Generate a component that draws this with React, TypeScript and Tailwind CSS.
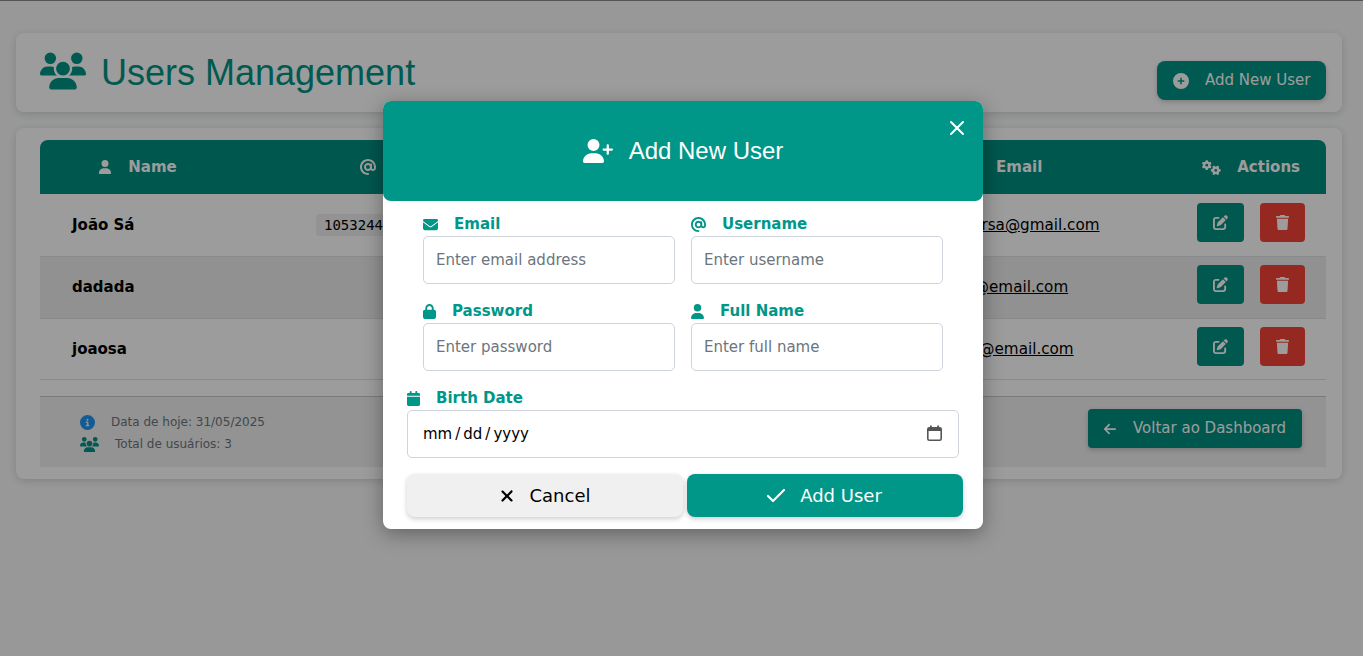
import { Check, X } from "lucide-react";
import {
  FaArrowLeft,
  FaAt,
  FaCalendar,
  FaCirclePlus,
  FaCircleInfo,
  FaEnvelope,
  FaGears,
  FaLock,
  FaPenToSquare,
  FaTrash,
  FaUser,
  FaUserPlus,
  FaUsers,
  FaXmark,
} from "react-icons/fa6";

const users = [
  { name: "João Sá", code: "10532441234", email: "joaoversa@gmail.com", height: "h-[63px]", codeOffset: "ml-0", offset: "ml-[1px]", actions: "-mt-[5px]", striped: false },
  { name: "dadada", code: "dadada", email: "dadada@email.com", height: "h-[62px]", codeOffset: "ml-[100px]", offset: "-ml-[13px]", actions: "-mt-[6px]", striped: true },
  { name: "joaosa", code: "joaosa", email: "joaosa@email.com", height: "h-[61px]", codeOffset: "ml-[100px]", offset: "ml-0", actions: "-mt-[6px]", striped: false },
];

function Field({ icon, label, placeholder }: { icon: React.ReactNode; label: string; placeholder: string }) {
  return (
    <div className="w-[252px]">
      <label className="flex h-[23px] items-center gap-4 text-[15px] font-bold text-[#009688]">
        {icon}
        {label}
      </label>
      <input
        placeholder={placeholder}
        className="block h-[48px] w-full rounded-[5px] border border-[#ced4da] bg-white px-3 text-[15px] outline-none placeholder:text-[#6c757d]"
      />
    </div>
  );
}

function CalendarGlyph() {
  return (
    <svg width="15" height="16" viewBox="0 0 15 16" fill="none" className="absolute right-[17px] top-[15px]">
      <rect x="0.8" y="2.8" width="13.4" height="12.4" rx="1.5" stroke="#555" strokeWidth="1.6" />
      <rect x="1" y="3" width="13" height="3" fill="#555" />
      <rect x="3" y="0.5" width="1.8" height="3" fill="#555" />
      <rect x="10.2" y="0.5" width="1.8" height="3" fill="#555" />
    </svg>
  );
}

export default function App() {
  return (
    <div className="relative h-[656px] overflow-hidden border-t border-[#555] bg-[#f8f9fa] font-['DejaVu_Sans',sans-serif] text-black">
      <div className="pl-4 pr-[21px] pt-8">
        <div className="flex h-[79px] justify-between rounded-lg bg-white pl-6 pr-4 shadow-[0_2px_8px_rgba(0,0,0,0.15)]">
          <h1 className="flex h-[79px] items-center gap-[15px] font-['Liberation_Sans',sans-serif] text-[36px] text-[#009485]">
            <FaUsers size={46} className="-mt-[4px]" />
            Users Management
          </h1>
          <button className="mt-7 flex h-[39px] w-[169px] items-center gap-[16px] rounded-lg bg-[#009485] pl-4 text-[15px] text-white shadow-[0_2px_5px_rgba(0,0,0,0.2)]">
            <FaCirclePlus size={16} />
            Add New User
          </button>
        </div>

        <div className="mt-4 rounded-lg bg-white pb-3 pl-6 pr-4 pt-3 shadow-[0_2px_8px_rgba(0,0,0,0.15)]">
          <div className="flex h-[54px] items-center rounded-t-lg bg-[#008e80] text-[15px] font-bold text-white">
            <div className="flex w-[195px] items-center justify-center gap-4">
              <FaUser size={14} />
              Name
            </div>
            <div className="flex w-[761px] items-center gap-4 pl-[125px]">
              <FaAt size={16} />
              Username
            </div>
            <div>Email</div>
            <div className="ml-auto flex items-center gap-4 pr-[26px]">
              <FaGears size={19} />
              Actions
            </div>
          </div>

          {users.map((user) => (
            <div
              key={user.name}
              className={`flex items-center border-b border-[#dee2e6] pl-8 pr-[21px] ${user.height} ${user.striped ? "bg-[#eeeeee]" : ""}`}
            >
              <div className="w-[244px] text-[15px] font-bold">{user.name}</div>
              <div className="-mt-[1px] w-[614px]">
                <code className={`rounded-[4px] bg-[#f0f0f0] px-2 py-[3px] font-['DejaVu_Sans_Mono',monospace] text-[14px] ${user.codeOffset}`}>
                  {user.code}
                </code>
              </div>
              <a className={`text-[15.2px] underline ${user.offset}`}>{user.email}</a>
              <div className={`ml-auto flex gap-4 ${user.actions}`}>
                <button className="flex h-[39px] w-[47px] items-center justify-center rounded-[4px] bg-[#009082] text-white">
                  <FaPenToSquare size={15} />
                </button>
                <button className="flex h-[39px] w-[45px] items-center justify-center rounded-[4px] bg-[#f44336] text-white">
                  <FaTrash size={15} />
                </button>
              </div>
            </div>
          ))}

          <div className="mt-4 flex h-[71px] items-start justify-between border-t border-[#c8c8c8] bg-[#f0f0f0] pl-10 pr-6 pt-3 text-[12px] text-[#6c757d]">
            <div className="pt-[2px]">
              <div className="flex h-[22px] items-center gap-4">
                <FaCircleInfo size={15} className="text-[#2196f3]" />
                Data de hoje: 31/05/2025
              </div>
              <div className="flex h-[22px] items-center gap-4">
                <FaUsers size={19} className="text-[#009485]" />
                Total de usuários: 3
              </div>
            </div>
            <button className="flex h-[39px] w-[214px] items-center gap-4 rounded-[4px] bg-[#008e80] pl-[15px] text-[15px] text-white shadow-[0_2px_5px_rgba(0,0,0,0.2)]">
              <FaArrowLeft size={14} />
              Voltar ao Dashboard
            </button>
          </div>
        </div>
      </div>

      <div className="absolute inset-0 flex justify-center bg-black/[0.39] pl-[3px]">
        <div className="mt-[100px] h-[428px] w-[600px] rounded-lg bg-white shadow-[0_5px_20px_rgba(0,0,0,0.35)]">
          <div className="relative flex h-[100px] items-center justify-center gap-4 rounded-lg bg-[#009688] font-['Liberation_Sans',sans-serif] text-[24px] text-white">
            <FaUserPlus size={30} />
            Add New User
            <X size={24} strokeWidth={2} className="absolute right-[14px] top-[15px]" />
          </div>

          <div className="px-6 pt-[12px]">
            <div className="flex gap-4 pl-4">
              <Field icon={<FaEnvelope size={15} />} label="Email" placeholder="Enter email address" />
              <Field icon={<FaAt size={15} />} label="Username" placeholder="Enter username" />
            </div>
            <div className="mt-4 flex gap-4 pl-4">
              <Field icon={<FaLock className="h-[15px] w-[13px]" />} label="Password" placeholder="Enter password" />
              <Field icon={<FaUser className="h-[15px] w-[13px]" />} label="Full Name" placeholder="Enter full name" />
            </div>
            <div className="mt-4 w-[552px]">
              <label className="flex h-[23px] items-center gap-4 text-[15px] font-bold text-[#009688]">
                <FaCalendar className="h-[15px] w-[13px]" />
                Birth Date
              </label>
              <div className="relative">
                <input
                  readOnly
                  defaultValue="mm / dd / yyyy"
                  className="block h-[48px] w-full rounded-[5px] border border-[#ced4da] bg-white px-[15px] text-[15px] [word-spacing:-1.75px] outline-none"
                />
                <CalendarGlyph />
              </div>
            </div>
            <div className="mt-4 flex gap-1">
              <button className="flex h-[43px] w-[276px] shrink-0 items-center justify-center gap-4 rounded-lg bg-[#f0f0f0] text-[18px] shadow-[0_2px_5px_rgba(0,0,0,0.2)]">
                <FaXmark className="h-[18px] w-[14px]" />
                Cancel
              </button>
              <button className="flex h-[43px] w-[276px] shrink-0 items-center justify-center gap-4 rounded-lg bg-[#009688] text-[18px] text-white shadow-[0_2px_5px_rgba(0,0,0,0.2)]">
                <Check size={24} strokeWidth={2.2} className="-mx-[4px]" />
                Add User
              </button>
            </div>
          </div>
        </div>
      </div>
    </div>
  );
}
